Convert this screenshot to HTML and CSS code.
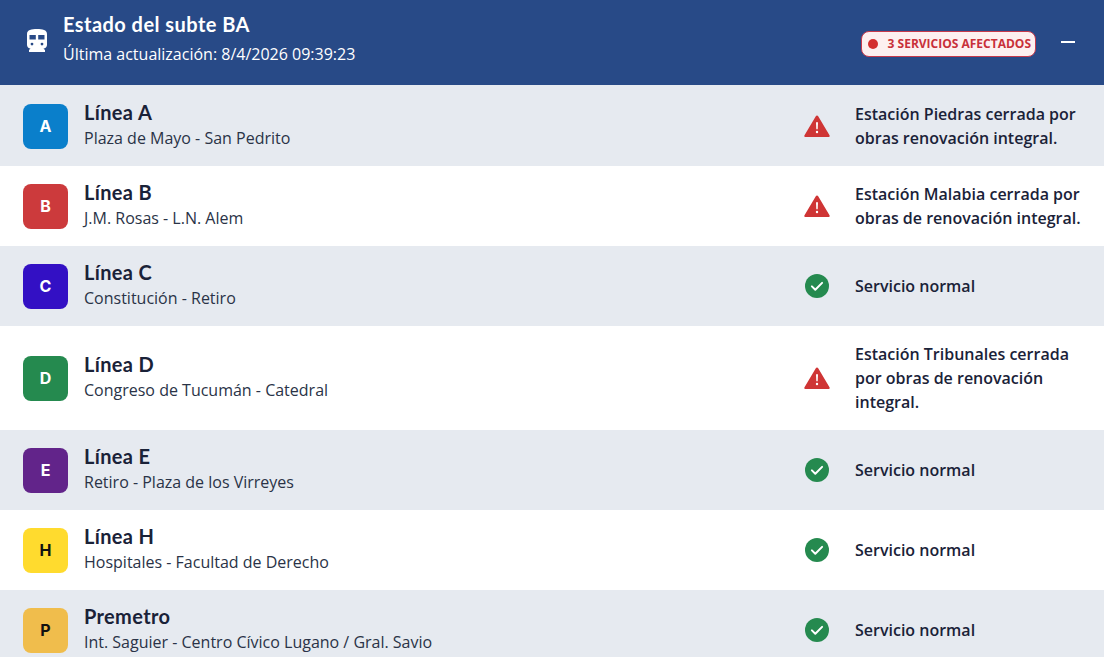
FILE: index.html
```html
<!DOCTYPE html>
<html lang="es">
<head>
<meta charset="utf-8">
<title>Estado del subte BA</title>
<link rel="stylesheet" href="styles.css">
</head>
<body>
<svg class="defs" width="0" height="0" aria-hidden="true">
  <symbol id="warn" viewBox="0 0 26 22"><path d="M13 .6c.5 0 1 .3 1.200.7l11.300 18.900c.5.8 0 1.800-1 1.800H1.500c-1 0-1.500-1-1-1.800L11.800 1.300c.2-.4.7-.7 1.200-.7z" fill="#cf3535"/><path d="M12 7.200h2l-.3 7h-1.400z" fill="#fff"/><circle cx="13" cy="17" r="1.200" fill="#fff"/></symbol>
  <symbol id="ok" viewBox="0 0 24 24"><circle cx="12" cy="12" r="12" fill="#258a4f"/><path d="M6.900 12.400l3.400 3.300 6.800-6.800" fill="none" stroke="#fff" stroke-width="2" stroke-linecap="round" stroke-linejoin="round"/></symbol>
</svg>
<header class="top">
  <svg class="train" viewBox="0 0 20 23" width="20" height="23" aria-hidden="true"><path fill="#fff" fill-rule="evenodd" d="M10 0C4.500 0 0 .7 0 5v11c0 1.900 1.600 3.500 3.500 3.500L2 21v2h16v-2l-1.500-1.500c1.900 0 3.500-1.600 3.500-3.500V5c0-4.300-4.500-5-10-5zM2.500 6h6.300v4.500H2.500zm8.700 0h6.300v4.500h-6.300zM5 13.700a1.400 1.400 0 1 1 0 2.800 1.400 1.400 0 0 1 0-2.800zm10 0a1.400 1.400 0 1 1 0 2.800 1.400 1.400 0 0 1 0-2.800z"/></svg>
  <div class="top-text">
    <h1>Estado del subte BA</h1>
    <p>Última actualización: 8/4/2026 09:39:23</p>
  </div>
  <div class="alert"><span class="dot"></span>3 SERVICIOS AFECTADOS</div>
  <span class="minus"></span>
</header>
<main>
  <section class="row">
    <span class="badge a">A</span>
    <div class="line"><h2>Línea A</h2><p>Plaza de Mayo - San Pedrito</p></div>
    <svg class="icon warn"><use href="#warn"/></svg>
    <p class="msg">Estación Piedras cerrada por obras renovación integral.</p>
  </section>
  <section class="row">
    <span class="badge b">B</span>
    <div class="line"><h2>Línea B</h2><p>J.M. Rosas - L.N. Alem</p></div>
    <svg class="icon warn"><use href="#warn"/></svg>
    <p class="msg">Estación Malabia cerrada por obras de renovación integral.</p>
  </section>
  <section class="row">
    <span class="badge c">C</span>
    <div class="line"><h2>Línea C</h2><p>Constitución - Retiro</p></div>
    <svg class="icon ok"><use href="#ok"/></svg>
    <p class="msg">Servicio normal</p>
  </section>
  <section class="row">
    <span class="badge d">D</span>
    <div class="line"><h2>Línea D</h2><p>Congreso de Tucumán - Catedral</p></div>
    <svg class="icon warn"><use href="#warn"/></svg>
    <p class="msg">Estación Tribunales cerrada por obras de renovación integral.</p>
  </section>
  <section class="row">
    <span class="badge e">E</span>
    <div class="line"><h2>Línea E</h2><p>Retiro - Plaza de los Virreyes</p></div>
    <svg class="icon ok"><use href="#ok"/></svg>
    <p class="msg">Servicio normal</p>
  </section>
  <section class="row">
    <span class="badge h">H</span>
    <div class="line"><h2>Línea H</h2><p>Hospitales - Facultad de Derecho</p></div>
    <svg class="icon ok"><use href="#ok"/></svg>
    <p class="msg">Servicio normal</p>
  </section>
  <section class="row">
    <span class="badge p">P</span>
    <div class="line"><h2>Premetro</h2><p>Int. Saguier - Centro Cívico Lugano / Gral. Savio</p></div>
    <svg class="icon ok"><use href="#ok"/></svg>
    <p class="msg">Servicio normal</p>
  </section>
</main>
</body>
</html>
```
FILE: styles.css
```css
* { box-sizing: border-box; }
html, body { margin: 0; height: 100%; overflow: hidden; }
body { font-family: "Open Sans", sans-serif; color: #1a2238; background: #fff; }
h1, h2, p { margin: 0; }
.defs { position: absolute; }

.top { height: 85px; background: #284a87; color: #fff; display: flex; align-items: center; padding: 0 29px 0 27px; }
.train { flex: none; margin-right: 16px; margin-top: -4px; }
.top-text { flex: 1; margin-top: -6px; }
.top h1 { font: 700 20px/22px Lato, sans-serif; letter-spacing: .45px; padding-bottom: 2px; }
.top p { font-size: 16px; line-height: 24px; margin-top: 5px; }
.alert { display: flex; align-items: center; height: 26px; padding: 0 4px 0 6px; margin: 2px 25px 0 0; background: #fdf0f0; border: 1px solid #c63a4c; border-radius: 8px; color: #c8303a; font-size: 12px; font-weight: 700; }
.dot { width: 10px; height: 10px; border-radius: 50%; background: #d32f2f; margin-right: 10px; }
.minus { width: 14px; height: 2px; background: #fff; margin-top: -1px; }

.row { display: flex; align-items: center; min-height: 80px; padding: 16px 16px 16px 23px; background: #fff; }
.row:first-child { min-height: 81px; padding-top: 17px; }
.row:nth-child(odd) { background: #e6eaf0; }
.badge { flex: none; width: 45px; height: 45px; border-radius: 8px; display: flex; align-items: center; justify-content: center; font: 700 16px Inter, sans-serif; color: #fff; margin-right: 16px; }
.a { background: #0a7fcb; }
.b { background: #cc3a3c; }
.c { background: #3310c4; }
.d { background: #258a4f; }
.e { background: #62248a; }
.h { background: #ffdb2e; color: #111; }
.p { background: #f0bd4c; color: #111; }
.line { flex: 1; }
.line h2 { font: 700 20px/20px Lato, sans-serif; letter-spacing: .35px; padding-bottom: 4px; }
.line p { font-size: 16px; line-height: 24px; color: #2a3347; }
.icon { flex: none; }
.warn { width: 26px; height: 22px; margin-right: 25px; }
.ok { width: 24px; height: 24px; margin-left: 1px; margin-right: 26px; }
.msg { flex: none; width: 233px; font-size: 16px; line-height: 24px; font-weight: 600; }
```
